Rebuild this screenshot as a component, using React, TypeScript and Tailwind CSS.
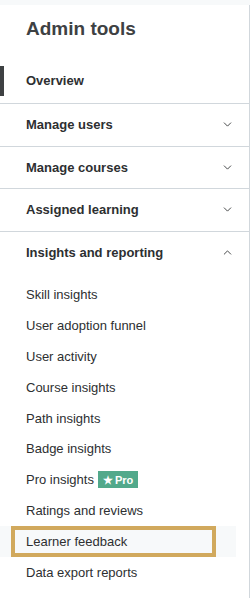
import { ChevronDown, ChevronUp } from "lucide-react"

const sections = ["Manage users", "Manage courses", "Assigned learning"]

const reports = [
  "Skill insights",
  "User adoption funnel",
  "User activity",
  "Course insights",
  "Path insights",
  "Badge insights",
  "Pro insights",
  "Ratings and reviews",
  "Learner feedback",
  "Data export reports",
]

export default function App() {
  return (
    <div
      className="w-[251px] h-[598px] bg-white overflow-hidden text-[#2d2f31]"
      style={{ fontFamily: '"Liberation Sans", Arial, sans-serif' }}
    >
      <div className="h-[5px] w-[250px] bg-[#f7f9fa]" />
      <nav className="w-[250px] h-[593px] border-r border-[#d1d7dc]">
        <h2 className="pl-[26px] pt-[12px] h-[61px] text-[19px] leading-[24px] font-bold text-[#3e4143]">
          Admin tools
        </h2>

        {/* Overview */}
        <div className="pb-[7px] border-b border-[#d1d7dc]">
          <div className="h-[30px] flex items-center border-l-4 border-[#3e4143] pl-[22px] text-[13px] font-bold">
            Overview
          </div>
        </div>

        {sections.map((s) => (
          <div
            key={s}
            className="h-[42.6px] flex items-center justify-between pl-[26px] pr-[15px] border-b border-[#d1d7dc] text-[13px] font-bold"
          >
            <span>{s}</span>
            <ChevronDown className="w-[13px] h-[13px]" strokeWidth={1.6} />
          </div>
        ))}

        <div className="h-[42px] flex items-center justify-between pl-[26px] pr-[15px] text-[13px] font-bold">
          <span>Insights and reporting</span>
          <ChevronUp className="w-[13px] h-[13px]" strokeWidth={1.6} />
        </div>

        <ul className="pt-[6px]">
          {reports.map((r) => {
            const active = r === "Learner feedback"
            return (
              <li
                key={r}
                className={
                  active
                    ? "h-[31px] w-[236px] bg-[#f7f9fa] flex items-center"
                    : "h-[30.8px] flex items-center pl-[26px] text-[13px]"
                }
              >
                {active ? (
                  <div className="ml-[11px] w-[205px] h-[31px] border-4 border-[#d1a95d] flex items-center pl-[11px] text-[13px]">
                    {r}
                  </div>
                ) : (
                  <>
                    <span>{r}</span>
                    {r === "Pro insights" && (
                      <span className="ml-[4px] h-[17px] px-[5px] bg-[#52a98b] text-white text-[11px] font-bold flex items-center gap-[2px]">
                        <span className="text-[11px]">★</span>Pro
                      </span>
                    )}
                  </>
                )}
              </li>
            )
          })}
        </ul>
      </nav>
    </div>
  )
}
